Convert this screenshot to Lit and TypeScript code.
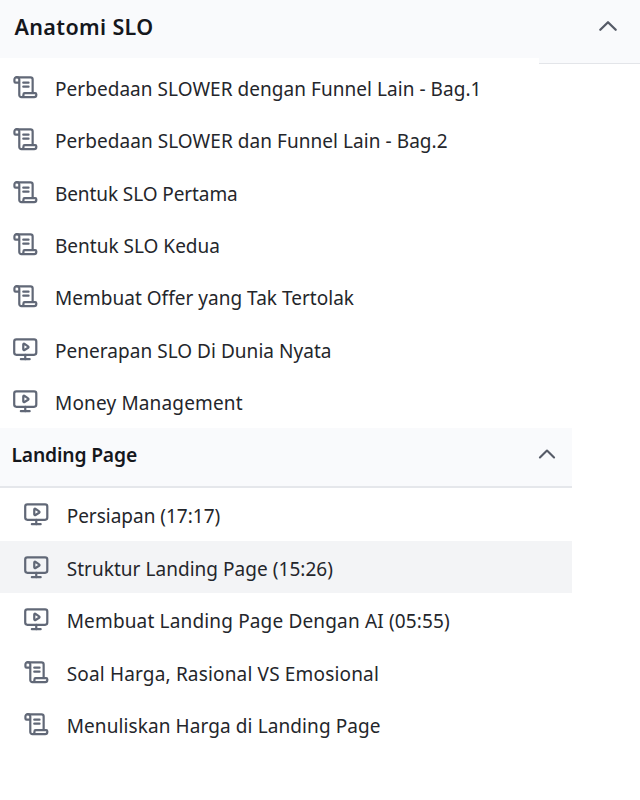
import { LitElement, html, svg, css } from "lit";
import { customElement, property } from "lit/decorators.js";

type Kind = "scroll" | "video";
interface Lesson { kind: Kind; title: string; width: number; active?: boolean }

const glyphs = {
  scroll: svg`<path d="M15 11.5h-4.8"/><path d="M15 7.9h-4.8"/><path d="M18.7 17V5a2 2 0 0 0-2-2H4.2"/><path d="M8.6 21H20a2 2 0 0 0 2-2v-.6a1 1 0 0 0-1-1H11.4a1 1 0 0 0-1 1v.6a1.9 1.9 0 1 1-3.8 0V5a2.2 2.2 0 1 0-4.4 0v1.8a1 1 0 0 0 1 1h3.2"/>`,
  video: svg`<path d="M10.2 7.75a.75.75 0 0 1 1.142-.638l3.264 2.249a.75.75 0 0 1 0 1.278l-3.264 2.05a.75.75 0 0 1-1.142-.64z"/><path d="M12 17v4"/><path d="M8 21h8"/><rect x="2" y="3" width="20" height="14" rx="2"/>`,
  chevron: svg`<path d="m4.3 15.8 7.7-7.6 7.7 7.6"/>`,
};

/* A single line of text whose tracking is adjusted so it spans a given width. */
@customElement("fit-text")
export class FitText extends LitElement {
  static styles = css`
    :host { display: block; white-space: nowrap; }
    .line { display: inline-block; }
  `;
  @property() text = "";
  @property({ type: Number }) width = 0;

  render() {
    return html`<span class="line">${this.text}</span>`;
  }

  async firstUpdated() {
    this.fit();
    await document.fonts.ready;
    this.fit();
  }

  private fit() {
    const line = this.renderRoot.querySelector<HTMLElement>(".line")!;
    line.style.letterSpacing = "0px";
    const natural = line.getBoundingClientRect().width;
    line.style.letterSpacing = `${(this.width - natural) / this.text.length}px`;
  }
}

@customElement("lesson-row")
export class LessonRow extends LitElement {
  static styles = css`
    :host { display: block; }
    .row { display: flex; align-items: center; height: 100%; box-sizing: border-box; padding: var(--drop, 1px) 0 0 var(--indent, 11.7px); gap: var(--gap, 16.8px); }
    .icon { flex: none; width: 26.5px; height: 26.5px; margin-bottom: 3.5px; fill: none; stroke: #616877; stroke-width: 2; stroke-linecap: round; stroke-linejoin: round; }
  `;
  @property({ attribute: false }) lesson!: Lesson;

  render() {
    const { kind, title, width } = this.lesson;
    return html`<div class="row">
      <svg class="icon" viewBox="0 0 24 24">${glyphs[kind]}</svg>
      <fit-text .text=${title} .width=${width}></fit-text>
    </div>`;
  }
}

const anatomy: Lesson[] = [
  { kind: "scroll", title: "Perbedaan SLOWER dengan Funnel Lain - Bag.1", width: 426.5 },
  { kind: "scroll", title: "Perbedaan SLOWER dan Funnel Lain - Bag.2", width: 392.7 },
  { kind: "scroll", title: "Bentuk SLO Pertama", width: 182.7 },
  { kind: "scroll", title: "Bentuk SLO Kedua", width: 165 },
  { kind: "scroll", title: "Membuat Offer yang Tak Tertolak", width: 299 },
  { kind: "video", title: "Penerapan SLO Di Dunia Nyata", width: 276.5 },
  { kind: "video", title: "Money Management", width: 187.8 },
];

const landing: Lesson[] = [
  { kind: "video", title: "Persiapan (17:17)", width: 153.5 },
  { kind: "video", title: "Struktur Landing Page (15:26)", width: 266.3, active: true },
  { kind: "video", title: "Membuat Landing Page Dengan AI (05:55)", width: 383.3 },
  { kind: "scroll", title: "Soal Harga, Rasional VS Emosional", width: 312.3 },
  { kind: "scroll", title: "Menuliskan Harga di Landing Page", width: 314 },
];

@customElement("app-root")
export class AppRoot extends LitElement {
  static styles = css`
    :host { display: block; width: 640px; height: 800px; overflow: hidden; background: #fff; color: #24262b; font: 400 19px/28px "Noto Sans", sans-serif; }
    .head { display: flex; justify-content: space-between; box-sizing: border-box; background: #f9fafc; color: #15171c; font-weight: 600; }
    .chev { fill: none; stroke: #565b67; stroke-linecap: round; stroke-linejoin: round; }
    .first { height: 62px; padding: 13px 20.5px 0 14.5px; font-size: 21.5px; background: linear-gradient(#f9fafc, #f9fafc) 0 0 / 100% 58px no-repeat, linear-gradient(#f9fafc, #f9fafc) 539px 0 / 101px 63px no-repeat; }
    .first .chev { width: 24px; height: 24px; stroke-width: 2.3; margin-top: 1px; }
    .edge { width: 101px; height: 2px; margin: 0 0 -2px 539px; box-sizing: border-box; background: #f9fafc; border-bottom: 1px solid #e3e5e9; }
    .second { width: 572px; height: 60px; padding: 12.6px 14.5px 0 11.5px; font-size: 19.3px; border-bottom: 2px solid #e5e7eb; }
    .second .chev { width: 22px; height: 22px; stroke-width: 2.3; margin-top: 2.4px; }
    .anatomy { height: 366px; }
    .anatomy lesson-row { height: 52.42px; }
    .landing { width: 572px; --indent: 22.8px; --drop: 3.4px; --gap: 17.4px; }
    .landing lesson-row { height: 52.6px; }
    .landing .active { background: #f3f4f6; }
  `;

  private list(items: Lesson[]) {
    return items.map(l => html`<lesson-row class=${l.active ? "active" : ""} .lesson=${l}></lesson-row>`);
  }

  render() {
    return html`
      <div class="head first">
        <fit-text .text=${"Anatomi SLO"} .width=${139}></fit-text>
        <svg class="chev" viewBox="0 0 24 24">${glyphs.chevron}</svg>
      </div>
      <div class="edge"></div>
      <div class="anatomy">${this.list(anatomy)}</div>
      <div class="head second">
        <fit-text .text=${"Landing Page"} .width=${125.5}></fit-text>
        <svg class="chev" viewBox="0 0 24 24">${glyphs.chevron}</svg>
      </div>
      <div class="landing">${this.list(landing)}</div>
    `;
  }
}
